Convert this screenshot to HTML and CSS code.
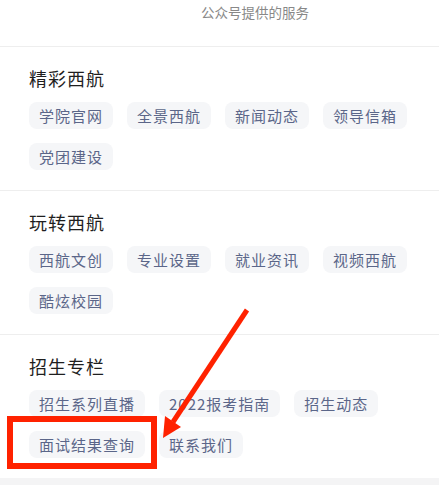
FILE: index.html
```html
<!DOCTYPE html>
<html lang="zh-CN">
<head>
  <meta charset="UTF-8">
  <meta name="viewport" content="width=device-width, initial-scale=1.0">
  <title>西航服务</title>
  <link rel="stylesheet" href="styles.css">
</head>
<body>
  <div class="top">公众号提供的服务</div>

  <section class="group">
    <h2>精彩西航</h2>
    <div class="tags">
      <span class="tag">学院官网</span>
      <span class="tag">全景西航</span>
      <span class="tag">新闻动态</span>
      <span class="tag">领导信箱</span>
      <span class="tag">党团建设</span>
    </div>
  </section>

  <section class="group">
    <h2>玩转西航</h2>
    <div class="tags">
      <span class="tag">西航文创</span>
      <span class="tag">专业设置</span>
      <span class="tag">就业资讯</span>
      <span class="tag">视频西航</span>
      <span class="tag">酷炫校园</span>
    </div>
  </section>

  <section class="group last">
    <h2>招生专栏</h2>
    <div class="tags">
      <span class="tag">招生系列直播</span>
      <span class="tag">2022报考指南</span>
      <span class="tag">招生动态</span>
      <span class="tag">面试结果查询</span>
      <span class="tag">联系我们</span>
    </div>
  </section>

  <div class="bottom"></div>

  <!-- 标注：红框 + 箭头 -->
  <svg class="mark" width="439" height="485" viewBox="0 0 439 485">
    <rect x="10" y="419" width="144" height="47" fill="none" stroke="#ff2200" stroke-width="6"/>
    <line x1="247" y1="310" x2="173" y2="422" stroke="#ff2200" stroke-width="5"/>
    <polygon points="163,438 165,416 181,427" fill="#ff2200"/>
  </svg>
</body>
</html>
```

FILE: styles.css
```css
body {
  margin: 0;
  padding: 0;
  background: #fff;
  font-family: "Noto Sans CJK SC", "Noto Sans", sans-serif;
  position: relative;
  height: 485px;
  overflow: hidden;
}
.top {
  height: 47px;
  box-sizing: border-box;
  padding: 2px 0 0 201px;
  font-size: 13.5px;
  line-height: 20px;
  color: #888;
  border-bottom: 1px solid #eeeeee;
}
.group {
  padding: 19px 29px 20px;
  border-bottom: 1px solid #eeeeee;
}
.group.last {
  border-bottom: none;
}
.group h2 {
  margin: 0 0 12px;
  font-size: 18px;
  font-weight: 400;
  line-height: 24px;
  letter-spacing: 1px;
  color: #1f1f1f;
}
.tags {
  display: flex;
  flex-wrap: wrap;
  gap: 14px 14px;
}
.tag {
  height: 27px;
  line-height: 27px;
  padding: 0 10px;
  font-size: 15px;
  letter-spacing: 1px;
  color: #5b6689;
  background: #f5f6f8;
  border-radius: 8px;
}
.bottom {
  height: 10px;
  background: #f4f4f5;
}
.mark {
  position: absolute;
  left: 0;
  top: 0;
  pointer-events: none;
}
```
